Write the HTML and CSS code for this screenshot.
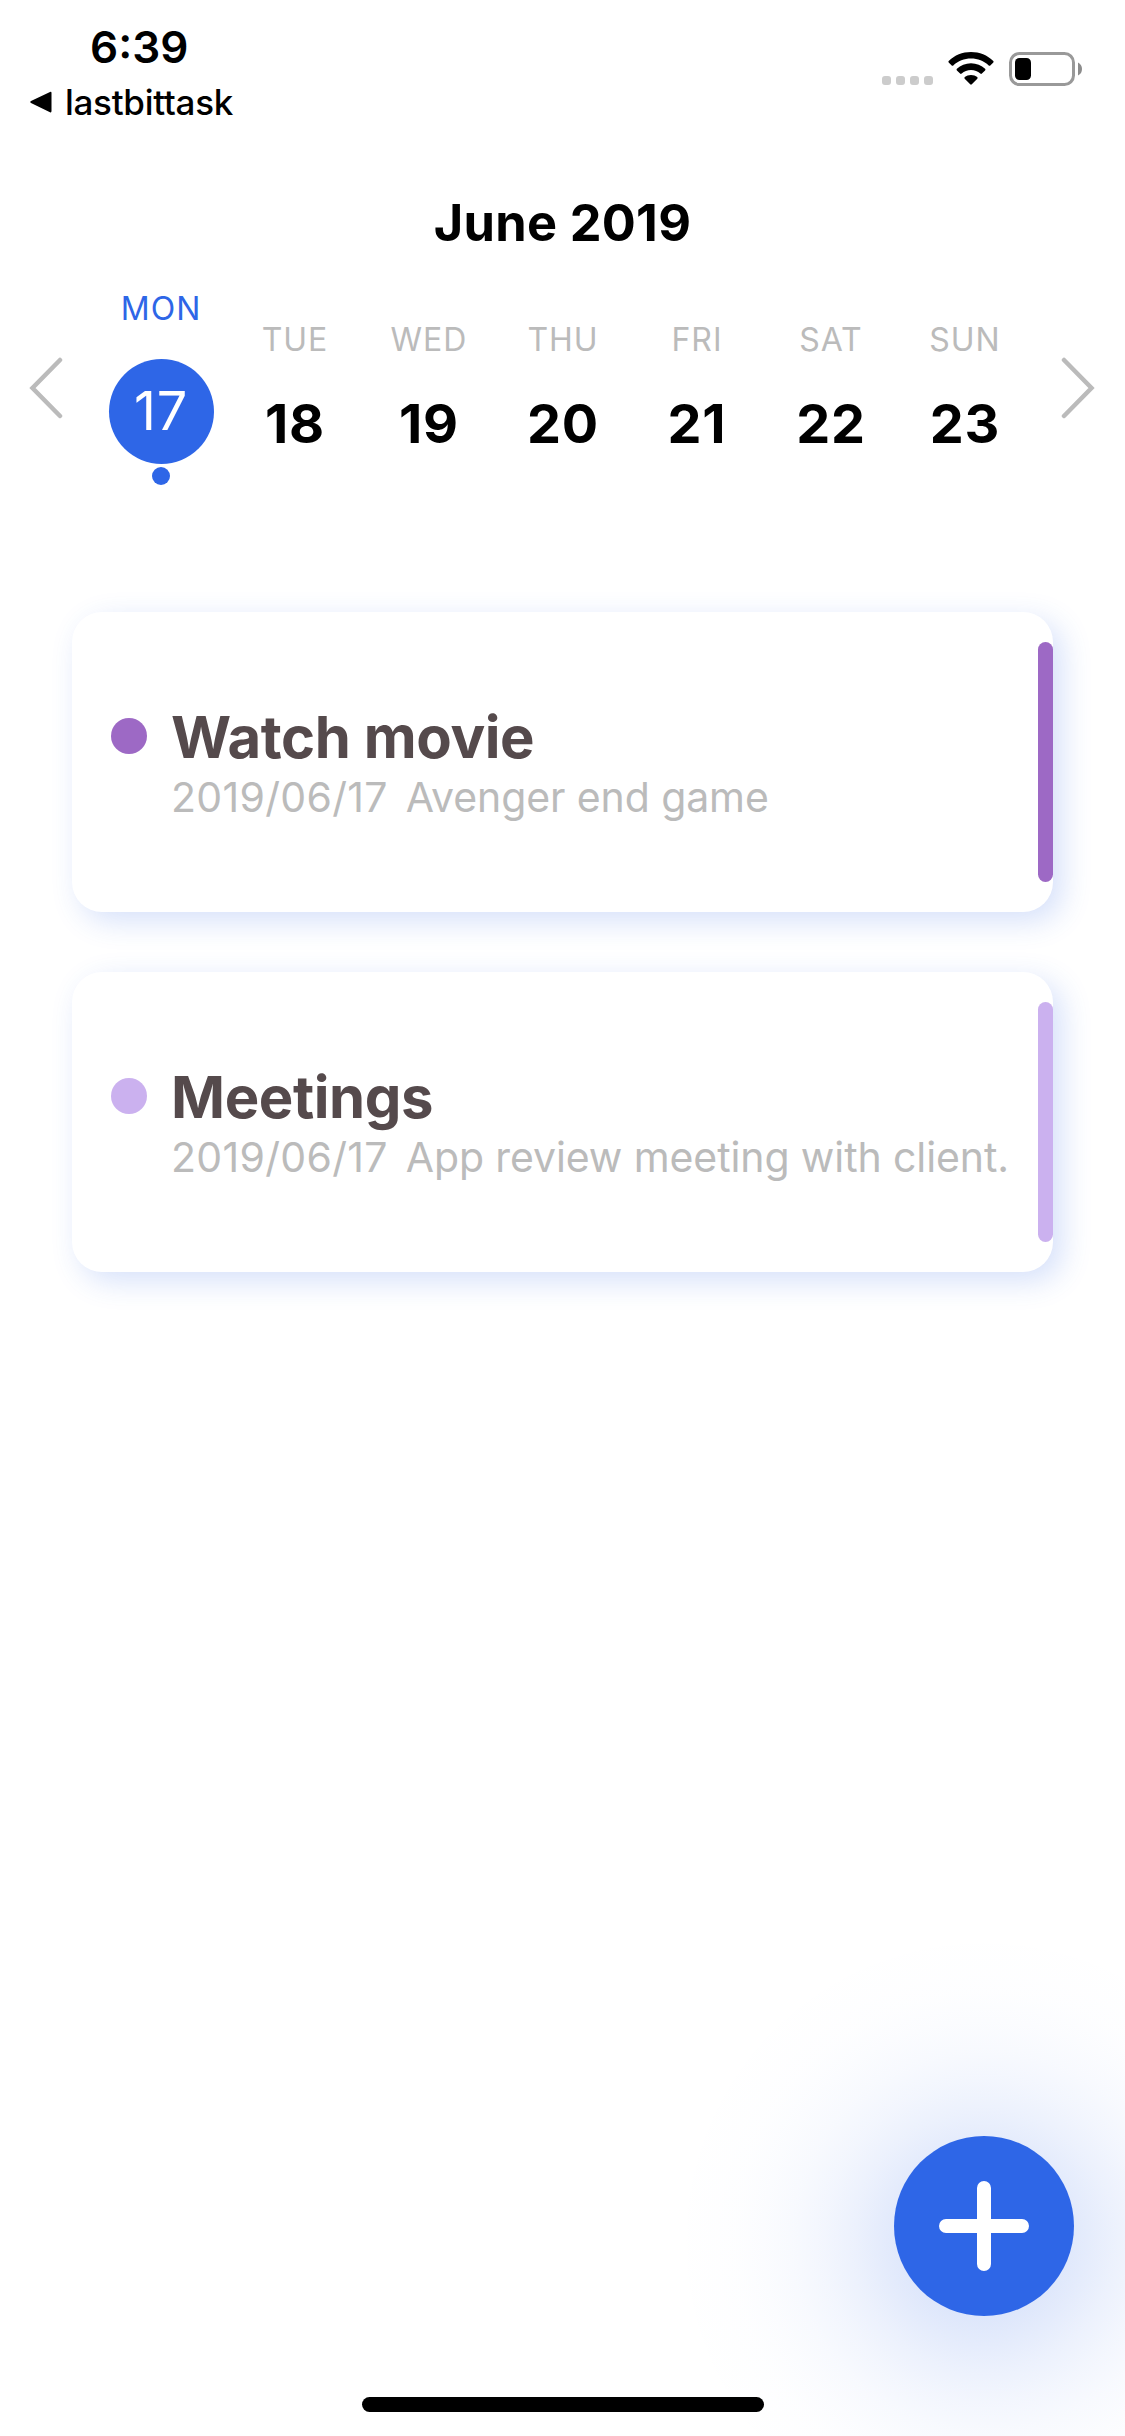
FILE: index.html
```html
<!DOCTYPE html>
<html lang="en">
<head>
<meta charset="utf-8">
<title>Tasks</title>
<link rel="stylesheet" href="styles.css">
</head>
<body>
<div class="screen">
  <header class="status">
    <div class="status-left">
      <div class="time">6:39</div>
      <div class="back">
        <svg class="back-icon" width="22" height="22" viewBox="0 0 22 22"><path d="M20 1Q21.5 0 21.5 2V20Q21.5 22 20 21.300L1 12Q-.5 11 1 10Z"/></svg>
        <span>lastbittask</span>
      </div>
    </div>
    <div class="status-right">
      <div class="signal"><i></i><i></i><i></i><i></i></div>
      <svg class="wifi" width="46" height="34" viewBox="0 0 46 34">
        <path d="M23 0C31.500 0 39.500 3.300 45.300 8.900Q46 9.700 45.300 10.500L42.300 13.500Q41.500 14.200 40.700 13.500C36 9.100 29.700 6.600 23 6.600S10 9.100 5.300 13.500Q4.500 14.200 3.700 13.500L.7 10.500Q0 9.700 .7 8.900C6.500 3.300 14.500 0 23 0Z"/>
        <path d="M23 11.200C28.500 11.200 33.400 13.300 37.100 16.800Q37.900 17.600 37.100 18.400L33.900 21.600Q33.200 22.300 32.300 21.600C29.800 19.300 26.600 18 23 18S16.200 19.300 13.700 21.600Q12.800 22.300 12.100 21.600L8.900 18.400Q8.100 17.600 8.900 16.800C12.600 13.300 17.500 11.200 23 11.200Z"/>
        <path d="M23 22.900C25.500 22.900 27.600 23.700 29.200 25.100Q30 25.900 29.300 26.700L23.800 32.300Q23 33 22.200 32.300L16.700 26.700Q16 25.900 16.800 25.100C18.400 23.700 20.500 22.900 23 22.900Z"/>
      </svg>
      <svg class="battery" width="74" height="34" viewBox="0 0 74 34">
        <rect x="1.500" y="1.500" width="63" height="31" rx="9" fill="none" stroke="#999" stroke-width="3"/>
        <rect x="6" y="6" width="16" height="22" rx="4.500"/>
        <path d="M69 10.500Q73 12.500 73 17T69 23.500Z" fill="#8c8c8c"/>
      </svg>
    </div>
  </header>

  <h1 class="month">June 2019</h1>

  <nav class="week">
    <svg class="arrow" width="34" height="64" viewBox="0 0 34 64"><path d="M31 4L3.500 32L31 60"/></svg>
    <div class="days">
      <div class="day day-active"><span class="name">MON</span><span class="num">17</span><i class="mark"></i></div>
      <div class="day"><span class="name">TUE</span><span class="num">18</span></div>
      <div class="day"><span class="name">WED</span><span class="num">19</span></div>
      <div class="day"><span class="name">THU</span><span class="num">20</span></div>
      <div class="day"><span class="name">FRI</span><span class="num">21</span></div>
      <div class="day"><span class="name">SAT</span><span class="num">22</span></div>
      <div class="day"><span class="name">SUN</span><span class="num">23</span></div>
    </div>
    <svg class="arrow" width="34" height="64" viewBox="0 0 34 64"><path d="M3 4L30.500 32L3 60"/></svg>
  </nav>

  <main class="tasks">
    <article class="card card-movie">
      <i class="dot"></i>
      <div class="body">
        <h2 class="title">Watch movie</h2>
        <p class="info"><span class="date">2019/06/17</span><span class="note">Avenger end game</span></p>
      </div>
      <i class="bar"></i>
    </article>
    <article class="card card-meeting">
      <i class="dot"></i>
      <div class="body">
        <h2 class="title">Meetings</h2>
        <p class="info"><span class="date">2019/06/17</span><span class="note">App review meeting with client.</span></p>
      </div>
      <i class="bar"></i>
    </article>
  </main>

  <div class="glow"></div>
  <button class="add" aria-label="Add task">
    <svg width="90" height="90" viewBox="0 0 90 90"><path d="M45 7V83M7 45H83"/></svg>
  </button>
  <div class="home"></div>
</div>
</body>
</html>
```
FILE: styles.css
```css
* { box-sizing: border-box; margin: 0; padding: 0; }
body { background: #fff; }
.screen {
  position: relative;
  display: flex;
  flex-direction: column;
  width: 1125px;
  height: 2436px;
  overflow: hidden;
  font-family: Inter, "Liberation Sans", sans-serif;
  color: #000;
  white-space: nowrap;
}
svg { display: block; flex: none; }

.status { display: flex; justify-content: space-between; height: 193px; padding: 20px 42px 0 30px; }
.time { padding-left: 60px; font-size: 44px; font-weight: 600; line-height: 55px; }
.back { display: flex; align-items: center; gap: 13px; font-size: 35px; font-weight: 500; line-height: 54px; letter-spacing: -.3px; }
.status-right { display: flex; align-items: flex-end; height: 66px; }
.signal { display: flex; gap: 5px; margin: 0 15px 1px 0; }
.signal i { width: 9px; height: 9px; border-radius: 3px; background: #ccc; }
.wifi { margin-right: 15px; }

.month { font-size: 50.5px; font-weight: 700; line-height: 60px; letter-spacing: .3px; text-align: center; }

.week { display: flex; justify-content: space-between; height: 359px; padding: 36px 30px 0 29px; }
.arrow { margin-top: 67px; fill: none; stroke: #bbb; stroke-width: 4.5px; stroke-linecap: round; }
.days { display: grid; grid-template-columns: repeat(7, 134px); align-items: start; padding-left: 2px; }
.day { display: flex; flex-direction: column; align-items: center; padding-top: 31px; }
.name { font-size: 32px; line-height: 40px; color: #bbb; letter-spacing: 1px; }
.num { margin-top: 34px; font-size: 54px; font-weight: 700; line-height: 60px; letter-spacing: .8px; }
.day-active { padding-top: 0; }
.day-active .name { color: #2e66e7; }
.day-active .num {
  width: 105px;
  height: 105px;
  margin-top: 30px;
  border-radius: 50%;
  background: #2e66e7;
  color: #fff;
  font-weight: 400;
  line-height: 103px;
  text-align: center;
}
.mark { width: 18px; height: 18px; margin-top: 3px; border-radius: 50%; background: #2e66e7; }

.tasks { display: flex; flex-direction: column; gap: 60px; padding: 0 72px; }
.card {
  display: flex;
  align-items: center;
  height: 300px;
  padding-left: 39px;
  border-radius: 30px;
  background: #fff;
  box-shadow: 9px 9px 30px rgba(46, 102, 231, .2);
}
.dot { width: 36px; height: 36px; margin: 0 24px 52px 0; border-radius: 50%; background: var(--tag); }
.body { flex: 1; }
.title { font-size: 58px; font-weight: 700; line-height: 70px; letter-spacing: -.4px; color: #554a4c; }
.info { display: flex; gap: 18px; font-size: 41px; line-height: 51px; letter-spacing: -.1px; color: #bbb; }
.date { letter-spacing: .3px; }
.bar { width: 15px; height: 240px; border-radius: 8px; background: var(--tag); }
.card-movie { --tag: #9d69c5; }
.card-meeting { --tag: #cbb1ef; }

/* Wide soft shadow under the add button */
.glow {
  position: absolute;
  right: -179px;
  bottom: -125px;
  width: 640px;
  height: 640px;
  background: radial-gradient(circle closest-side,
    rgba(46, 102, 231, .21) 0,
    rgba(46, 102, 231, .186) 50px,
    rgba(46, 102, 231, .159) 75px,
    rgba(46, 102, 231, .128) 100px,
    rgba(46, 102, 231, .091) 130px,
    rgba(46, 102, 231, .059) 160px,
    rgba(46, 102, 231, .035) 190px,
    rgba(46, 102, 231, .019) 220px,
    rgba(46, 102, 231, .009) 250px,
    rgba(46, 102, 231, .004) 280px,
    rgba(46, 102, 231, 0) 315px);
}
.add {
  position: absolute;
  right: 51px;
  bottom: 120px;
  display: grid;
  place-items: center;
  width: 180px;
  height: 180px;
  border: 0;
  border-radius: 50%;
  background: #2e66e7;
}
.add path { fill: none; stroke: #fff; stroke-width: 14px; stroke-linecap: round; }
.home { position: relative; align-self: center; width: 402px; height: 15px; margin: auto 0 24px 1px; border-radius: 8px; background: #000; }
```
